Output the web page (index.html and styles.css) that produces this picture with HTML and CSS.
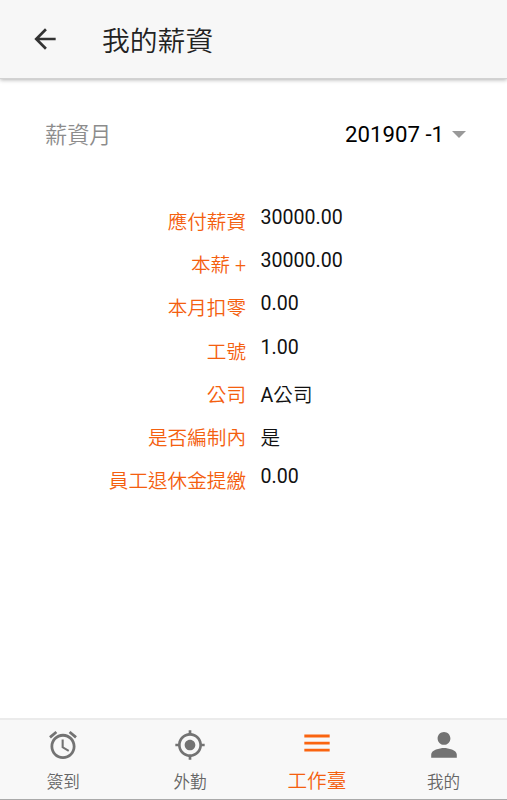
FILE: index.html
```
<!DOCTYPE html>
<html lang="zh-Hant">
<head>
<meta charset="utf-8">
<title>我的薪資</title>
<link rel="stylesheet" href="styles.css">
</head>
<body>
<div class="app">
  <header class="bar">
    <svg class="back" viewBox="0 0 24 24"><path d="M20 11H7.83l5.59-5.59L12 4l-8 8 8 8 1.41-1.41L7.83 13H20v-2z"/></svg>
    <h1 class="title">我的薪資</h1>
  </header>
  <main class="content">
    <div class="month">
      <span class="month-label">薪資月</span>
      <span class="month-value">201907 -1</span>
      <span class="caret"></span>
    </div>
    <dl class="list">
      <div class="row"><dt>應付薪資</dt><dd>30000.00</dd></div>
      <div class="row"><dt>本薪 +</dt><dd>30000.00</dd></div>
      <div class="row"><dt>本月扣零</dt><dd>0.00</dd></div>
      <div class="row"><dt>工號</dt><dd>1.00</dd></div>
      <div class="row"><dt>公司</dt><dd>A<span class="cjk">公司</span></dd></div>
      <div class="row"><dt>是否編制內</dt><dd><span class="cjk">是</span></dd></div>
      <div class="row"><dt>員工退休金提繳</dt><dd>0.00</dd></div>
    </dl>
  </main>
  <nav class="tabs">
    <a class="tab">
      <svg class="icon" viewBox="0.5 0.5 23 23"><path d="M22 5.72l-4.6-3.86-1.29 1.53 4.6 3.86L22 5.72zM7.88 3.39L6.6 1.86 2 5.71l1.29 1.53 4.59-3.85zM12.5 8H11v6l4.75 2.85.75-1.23-4-2.37V8zM12 4c-4.97 0-9 4.03-9 9s4.02 9 9 9c4.97 0 9-4.03 9-9s-4.03-9-9-9zm0 16c-3.87 0-7-3.13-7-7s3.13-7 7-7 7 3.13 7 7-3.13 7-7 7z"/></svg>
      <span class="tab-label">簽到</span>
    </a>
    <a class="tab">
      <svg class="icon" viewBox="0 0 24 24"><path d="M12 8c-2.21 0-4 1.79-4 4s1.79 4 4 4 4-1.79 4-4-1.79-4-4-4zm8.94 3c-.46-4.17-3.77-7.48-7.94-7.94V1h-2v2.06C6.83 3.52 3.52 6.83 3.06 11H1v2h2.06c.46 4.17 3.77 7.48 7.94 7.94V23h2v-2.06c4.17-.46 7.48-3.77 7.94-7.94H23v-2h-2.06zM12 19c-3.87 0-7-3.13-7-7s3.13-7 7-7 7 3.13 7 7-3.13 7-7 7z"/></svg>
      <span class="tab-label">外勤</span>
    </a>
    <a class="tab active">
      <svg class="icon" viewBox="0 0 24 24"><path d="M2.500 16.900h19v-2.100h-19v2.100zm0-5.300h19v-2.100h-19v2.100zm0-7.400v2.100h19v-2.100h-19z"/></svg>
      <span class="tab-label">工作臺</span>
    </a>
    <a class="tab">
      <svg class="icon" viewBox="2 2.100 20 20"><path d="M12 12c2.210 0 4-1.790 4-4s-1.790-4-4-4-4 1.790-4 4 1.790 4 4 4zm0 2c-2.670 0-8 1.340-8 4v2h16v-2c0-2.660-5.330-4-8-4z"/></svg>
      <span class="tab-label">我的</span>
    </a>
  </nav>
</div>
</body>
</html>
```
FILE: styles.css
```
* { box-sizing: border-box; }
body {
  margin: 0;
  background: #fff;
  color: #111;
  font-family: Roboto, "Noto Sans CJK TC", sans-serif;
  font-weight: 350;
}
.app { display: flex; flex-direction: column; height: 800px; }
.bar {
  display: flex;
  align-items: center;
  height: 79px;
  flex: none;
  padding-left: 29px;
  background: #f7f7f7;
  border-bottom: 1px solid #d2d2d2;
  box-shadow: 0 1px 4px rgba(0, 0, 0, .3);
}
.back { width: 32px; height: 32px; fill: #333; }
.title {
  margin: 5px 0 0 41px;
  font-size: 27.8px;
  line-height: 40px;
  font-weight: 350;
  color: #222;
}
.content { flex: 1; }
.month {
  display: flex;
  align-items: center;
  height: 32px;
  margin: 39px 41px 0 45px;
  font-size: 22.2px;
  line-height: 32px;
}
.month-label { flex: 1; padding-top: 1px; color: #8c8c8c; }
.month-value { color: #000; font-weight: 400; }
.caret {
  margin-left: 8px;
  border: 7px solid transparent;
  border-top-color: #999;
  border-bottom: 0;
}
.list { margin: 56px 0 0; font-size: 19.6px; }
.row { display: flex; align-items: flex-start; height: 43.2px; }
dt { width: 246px; text-align: right; color: #f4600f; }
dd { margin: 0 0 0 14.5px; color: #111; font-weight: 400; }
.cjk { font-weight: 350; }
.tabs {
  display: flex;
  height: 82px;
  flex: none;
  background: #f8f8f8;
  border-top: 2px solid #ebebeb;
  border-bottom: 1px solid #aaa;
}
.tab {
  flex: 1;
  display: flex;
  flex-direction: column;
  align-items: center;
  padding-top: 9px;
  color: #666;
  font-size: 16.6px;
}
.icon { width: 32px; height: 32px; fill: #737373; }
.tab-label { margin-top: 10px; line-height: 24px; }
.active { color: #f4600f; font-size: 19.6px; }
.active .icon { fill: #fa6410; }
.active .tab-label { margin-top: 9px; }
```
